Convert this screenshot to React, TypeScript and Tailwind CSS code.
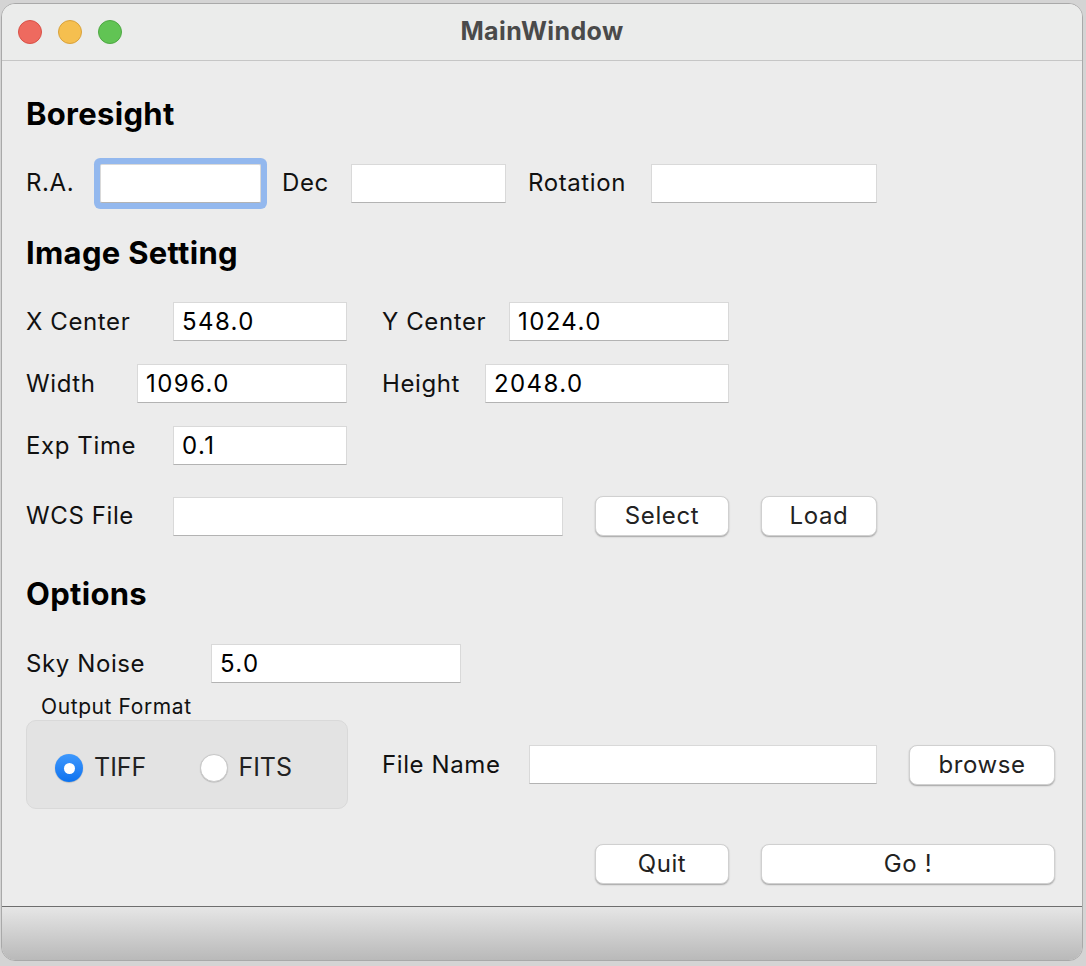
import React from "react";

const font = { fontFamily: "Inter, 'Noto Sans', 'Liberation Sans', sans-serif" };

function Field({ w, value, focused }: { w: string; value?: string; focused?: boolean }) {
  return (
    <div
      className={`${w} h-[39px] bg-white border border-[#d9d9d9] border-b-[#b3b3b3] flex items-center pl-[8px] text-[24px] tracking-[1.4px] text-black ${
        focused ? "rounded-[2px] ring-[6px] ring-[#93b8ee]" : ""
      }`}
    >
      {value}
    </div>
  );
}

function Btn({ w, children }: { w: string; children: React.ReactNode }) {
  return (
    <div
      className={`${w} h-[40px] bg-white rounded-[8px] border-[0.5px] border-[#d0d0d0] shadow-[0_1px_1.5px_rgba(0,0,0,0.3)] flex items-center justify-center text-[24px] tracking-[0.6px] text-[#222]`}
    >
      {children}
    </div>
  );
}

function Label({ w, children, ml }: { w: string; children: React.ReactNode; ml?: string }) {
  return (
    <div className={`${w} ${ml ?? ""} text-[24px] tracking-[0.6px] text-[#111] leading-none whitespace-nowrap`}>
      {children}
    </div>
  );
}

export default function App() {
  return (
    <div className="w-[1086px] h-[966px] bg-[#d4d4d4] pt-[3px] pl-[1px] overflow-hidden" style={font}>
      <div className="w-[1082px] h-[958px] rounded-[14px] border border-[#a9a9a9] bg-[#ececec] flex flex-col overflow-hidden">
        {/* Title bar */}
        <div className="h-[57px] shrink-0 bg-[#ebeceb] border-b border-[#c6c6c6] flex items-center relative">
          <div className="flex items-center gap-[16px] pl-[16px]">
            <div className="w-[24px] h-[24px] rounded-full bg-[#ee6a5f] border border-[#d95147]" />
            <div className="w-[24px] h-[24px] rounded-full bg-[#f5bf4f] border border-[#d9a23b]" />
            <div className="w-[24px] h-[24px] rounded-full bg-[#61c454] border border-[#4ea843]" />
          </div>
          <div className="absolute inset-0 flex items-center justify-center text-[25px] tracking-[0.4px] font-bold text-[#4a4a4a] pointer-events-none">
            MainWindow
          </div>
        </div>

        {/* Content */}
        <div className="flex-1 flex flex-col pl-[24px]">
          <div className="mt-[33px] h-[40px] flex items-center text-[31px] tracking-[0.3px] font-bold text-black">Boresight</div>

          <div className="mt-[23px] h-[52px] flex items-center">
            <Label w="w-[74px]">R.A.</Label>
            <Field w="w-[161px]" focused />
            <Label w="w-[69px]" ml="ml-[21px]">Dec</Label>
            <Field w="w-[155px]" />
            <Label w="w-[123px]" ml="ml-[22px]">Rotation</Label>
            <Field w="w-[226px]" />
          </div>

          <div className="mt-[24px] h-[40px] flex items-center text-[31px] tracking-[0.3px] font-bold text-black">Image Setting</div>

          <div className="mt-[29px] h-[39px] flex items-center">
            <Label w="w-[147px]">X Center</Label>
            <Field w="w-[174px]" value="548.0" />
            <Label w="w-[127px]" ml="ml-[35px]">Y Center</Label>
            <Field w="w-[220px]" value="1024.0" />
          </div>

          <div className="mt-[23px] h-[39px] flex items-center">
            <Label w="w-[111px]">Width</Label>
            <Field w="w-[210px]" value="1096.0" />
            <Label w="w-[103px]" ml="ml-[35px]">Height</Label>
            <Field w="w-[244px]" value="2048.0" />
          </div>

          <div className="mt-[23px] h-[39px] flex items-center">
            <Label w="w-[147px]">Exp Time</Label>
            <Field w="w-[174px]" value="0.1" />
          </div>

          <div className="mt-[31px] h-[40px] flex items-center">
            <Label w="w-[147px]">WCS File</Label>
            <Field w="w-[390px]" />
            <div className="ml-[32px]">
              <Btn w="w-[134px]">Select</Btn>
            </div>
            <div className="ml-[32px]">
              <Btn w="w-[116px]">Load</Btn>
            </div>
          </div>

          <div className="mt-[38px] h-[40px] flex items-center text-[31px] tracking-[0.3px] font-bold text-black">Options</div>

          <div className="mt-[30px] h-[39px] flex items-center">
            <Label w="w-[185px]">Sky Noise</Label>
            <Field w="w-[250px]" value="5.0" />
          </div>

          <div className="mt-[14px] h-[20px] flex items-center pl-[15px] text-[21px] tracking-[0.6px] text-[#111]">Output Format</div>

          <div className="mt-[3px] h-[89px] flex items-center">
            <div className="w-[322px] h-[89px] rounded-[10px] bg-[#e3e3e3] border border-[#d9d9d9] flex items-center pl-[28px] pt-[7px]">
              <div className="w-[28px] h-[28px] rounded-full bg-gradient-to-b from-[#3d98fd] to-[#0a72ef] flex items-center justify-center shadow-[0_0.5px_1px_rgba(0,0,0,0.3)]">
                <div className="w-[11px] h-[11px] rounded-full bg-white" />
              </div>
              <div className="ml-[11px] text-[25px] text-[#222]">TIFF</div>
              <div className="ml-[54px] w-[28px] h-[28px] rounded-full bg-white border border-[#c8c8c8] shadow-[0_0.5px_1px_rgba(0,0,0,0.2)]" />
              <div className="ml-[10px] text-[25px] text-[#222]">FITS</div>
            </div>
            <Label w="w-[147px]" ml="ml-[34px]">File Name</Label>
            <Field w="w-[348px]" />
            <div className="ml-[32px]">
              <Btn w="w-[146px]">browse</Btn>
            </div>
          </div>

          <div className="mt-[35px] h-[40px] flex items-center pl-[569px]">
            <Btn w="w-[134px]">Quit</Btn>
            <div className="ml-[32px]">
              <Btn w="w-[294px]">Go !</Btn>
            </div>
          </div>
        </div>

        {/* Bottom bar */}
        <div className="h-[54px] shrink-0 border-t border-[#6e6e6e] bg-gradient-to-b from-[#e6e6e6] to-[#b9b9b9]" />
      </div>
    </div>
  );
}
